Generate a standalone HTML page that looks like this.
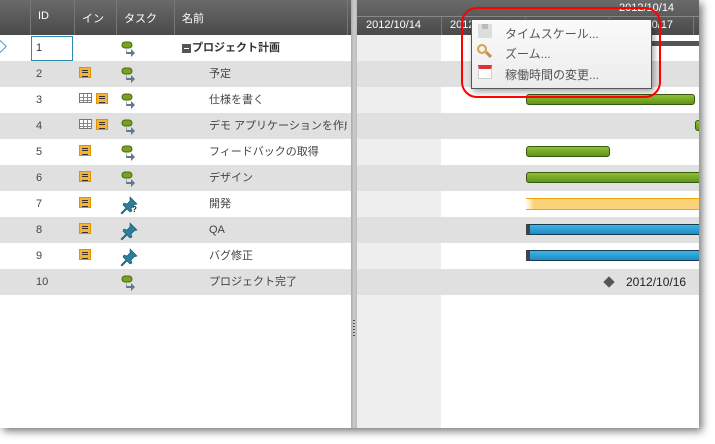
<!DOCTYPE html>
<html><head><meta charset="utf-8"><style>
*{margin:0;padding:0;box-sizing:border-box}
body{width:715px;height:444px;background:#fff;position:relative;overflow:hidden;font-family:"Liberation Sans","Noto Sans CJK JP",sans-serif;font-size:11px;color:#444}
.a{position:absolute}
#frame{left:0;top:0;width:699px;height:428px;background:#fff;box-shadow:3px 3px 8px rgba(0,0,0,.55);overflow:hidden}
.hdr{background:linear-gradient(#6a6a6a,#4a4a4a);color:#fff;font-size:11px}
.row{position:absolute;left:0;width:351px;height:26px}
.crow{position:absolute;left:357px;width:342px;height:26px}
.g{background:#e0e0e0}
.t{position:absolute;line-height:26px;white-space:nowrap}
.note{position:absolute;width:12px;height:11px;background:#f9b233;border:1px solid #e29400}
.note:after{content:"";position:absolute;left:2px;top:2px;width:6px;height:5px;border-top:1px solid #333;border-bottom:1px solid #333}
.note:before{content:"";position:absolute;left:2px;top:4px;width:6px;border-top:1px solid #333}
.cal{position:absolute;width:13px;height:10px;background:#fff;border:1px solid #777;background-image:linear-gradient(90deg,transparent 3px,#888 3px,#888 4px,transparent 4px,transparent 7px,#888 7px,#888 8px,transparent 8px),linear-gradient(transparent 3px,#888 3px,#888 4px,transparent 4px,transparent 6px,#888 6px,#888 7px,transparent 7px)}
.bar{position:absolute;height:11px;border-radius:3px}
.green{background:linear-gradient(#8fbf30,#5f9420);border:1px solid #355a10}
.blue{background:linear-gradient(#3cb4e6,#1f8cc4);border:1px solid #1a3a50;border-left:4px solid #444}
</style></head><body>
<div id="frame" class="a">
 <!-- headers -->
 <div class="a hdr" style="left:0;top:0;width:351px;height:35px"></div>
 <div class="a" style="left:30px;top:0;width:1px;height:35px;background:#777"></div>
 <div class="a" style="left:74px;top:0;width:1px;height:35px;background:#777"></div>
 <div class="a" style="left:116px;top:0;width:1px;height:35px;background:#777"></div>
 <div class="a" style="left:174px;top:0;width:1px;height:35px;background:#777"></div>
 <div class="a" style="left:347px;top:0;width:1px;height:35px;background:#777"></div>
 <div class="a" style="left:38px;top:10px;color:#fff">ID</div>
 <div class="a" style="left:82px;top:10px;color:#fff">イン</div>
 <div class="a" style="left:124px;top:10px;color:#fff">タスク</div>
 <div class="a" style="left:182px;top:10px;color:#fff">名前</div>
 <div class="a hdr" style="left:357px;top:0;width:342px;height:35px"></div>
 <div class="a" style="left:357px;top:16px;width:342px;height:1px;background:#888"></div>
 <div class="a" style="left:619px;top:2px;color:#fff">2012/10/14</div>
 <div class="a" style="left:441px;top:17px;width:1px;height:18px;background:#777"></div>
 <div class="a" style="left:525px;top:17px;width:1px;height:18px;background:#777"></div>
 <div class="a" style="left:609px;top:17px;width:1px;height:18px;background:#777"></div>
 <div class="a" style="left:693px;top:17px;width:1px;height:18px;background:#777"></div>
 <div class="a" style="left:366px;top:19px;color:#fff">2012/10/14</div>
 <div class="a" style="left:450px;top:19px;color:#fff">2012/10/15</div>
 <div class="a" style="left:618px;top:19px;color:#fff">2012/10/17</div>
 <!-- splitter -->
 <div class="a" style="left:351px;top:0;width:6px;height:428px;background:linear-gradient(90deg,#aaa,#ccc,#bbb)"></div>
 <div class="a" style="left:353px;top:320px;width:2px;height:18px;background:repeating-linear-gradient(#555 0 1px,transparent 1px 3px)"></div>
 <!-- chart background -->
 <div class="a" style="left:357px;top:35px;width:84px;height:393px;background:#eee"></div>
 <!-- rows -->
 <div class="row g" style="top:61px"></div><div class="crow g" style="top:61px"></div>
 <div class="row g" style="top:113px"></div><div class="crow g" style="top:113px"></div>
 <div class="row g" style="top:165px"></div><div class="crow g" style="top:165px"></div>
 <div class="row g" style="top:217px"></div><div class="crow g" style="top:217px"></div>
 <div class="row g" style="top:269px"></div><div class="crow g" style="top:269px"></div>
 <div class="a" style="left:31px;top:36px;width:42px;height:25px;border:1px solid #2a8ab4"></div>
 <div class="a" style="left:-4px;top:42px;width:9px;height:9px;border:1px solid #3aa0d0;transform:rotate(45deg)"></div>
 <div class="t" style="left:36px;top:35px;color:#333">1</div>
 <div class="t" style="left:36px;top:61px">2</div>
 <div class="t" style="left:36px;top:87px">3</div>
 <div class="t" style="left:36px;top:113px">4</div>
 <div class="t" style="left:36px;top:139px">5</div>
 <div class="t" style="left:36px;top:165px">6</div>
 <div class="t" style="left:36px;top:191px">7</div>
 <div class="t" style="left:36px;top:217px">8</div>
 <div class="t" style="left:36px;top:243px">9</div>
 <div class="t" style="left:36px;top:269px">10</div>
 <!-- info icons -->
 <div class="note" style="left:79px;top:67px"></div>
 <div class="cal" style="left:79px;top:93px"></div><div class="note" style="left:96px;top:93px"></div>
 <div class="cal" style="left:79px;top:119px"></div><div class="note" style="left:96px;top:119px"></div>
 <div class="note" style="left:79px;top:145px"></div>
 <div class="note" style="left:79px;top:171px"></div>
 <div class="note" style="left:79px;top:197px"></div>
 <div class="note" style="left:79px;top:223px"></div>
 <div class="note" style="left:79px;top:249px"></div>
 <!-- task icons -->
 <svg class="a" style="left:0;top:0" width="351" height="300">
  <defs>
   <g id="auto"><rect x="0" y="0" width="10" height="6" rx="3" fill="#7aa020" stroke="#4a6a10"/><path d="M5 6v5h4v-3l4 4-4 4v-3H4z" fill="#5f7a8f" transform="translate(0,-1)"/></g>
   <g id="pin"><path d="M9 1l7 7-3 1-3 3 1 3-2 1-3-3-5 5-1-1 5-5-3-3 1-2 3 1 3-3z" fill="#2a7f9a" stroke="#1a5060" stroke-width=".6"/></g>
  </defs>
  <use href="#auto" x="122" y="42"/>
  <use href="#auto" x="122" y="68"/>
  <use href="#auto" x="122" y="94"/>
  <use href="#auto" x="122" y="120"/>
  <use href="#auto" x="122" y="146"/>
  <use href="#auto" x="122" y="172"/>
  <use href="#pin" x="121" y="196"/>
  <text x="132" y="212" font-size="8" font-weight="bold" fill="#222" font-family="Liberation Sans">?</text>
  <use href="#pin" x="121" y="222"/>
  <use href="#pin" x="121" y="248"/>
  <use href="#auto" x="122" y="276"/>
 </svg>
 <div class="a" style="left:182px;top:44px;width:9px;height:9px;background:#555"></div>
 <div class="a" style="left:184px;top:48px;width:5px;height:1px;background:#fff"></div>
 <div class="t" style="left:192px;top:35px;color:#333;font-weight:bold">プロジェクト計画</div>
 <div class="t" style="left:209px;top:61px">予定</div>
 <div class="t" style="left:209px;top:87px">仕様を書く</div>
 <div class="t" style="left:209px;top:113px;width:138px;overflow:hidden">デモ アプリケーションを作成</div>
 <div class="t" style="left:209px;top:139px">フィードバックの取得</div>
 <div class="t" style="left:209px;top:165px">デザイン</div>
 <div class="t" style="left:209px;top:191px">開発</div>
 <div class="t" style="left:209px;top:217px">QA</div>
 <div class="t" style="left:209px;top:243px">バグ修正</div>
 <div class="t" style="left:209px;top:269px">プロジェクト完了</div>
 <!-- bars -->
 <div class="a" style="left:640px;top:41px;width:60px;height:5px;background:#555"></div>
 <div class="bar green" style="left:526px;top:94px;width:169px"></div>
 <div class="bar green" style="left:695px;top:120px;width:10px"></div>
 <div class="bar green" style="left:526px;top:146px;width:84px"></div>
 <div class="bar green" style="left:526px;top:172px;width:180px"></div>
 <div class="bar" style="left:526px;top:198px;width:180px;height:12px;border-radius:0;background:linear-gradient(90deg,#fff,#fbd27a 8px);border-top:1px solid #f0a800;border-bottom:1px solid #f0a800"></div>
 <div class="bar blue" style="left:526px;top:224px;width:180px;border-radius:0"></div>
 <div class="bar blue" style="left:526px;top:250px;width:180px;border-radius:0"></div>
 <div class="a" style="left:605px;top:278px;width:8px;height:8px;background:#555;transform:rotate(45deg)"></div>
 <div class="t" style="left:626px;top:269px;color:#222;font-size:12px">2012/10/16</div>
 <!-- menu -->
 <div class="a" style="left:471px;top:19px;width:181px;height:70px;background:linear-gradient(#fafafa,#ececec);border:1px solid #555;box-shadow:2px 3px 6px rgba(0,0,0,.35)"></div>
 <div class="a" style="left:478px;top:24px;width:14px;height:14px;background:#ddd"></div>
 <div class="a" style="left:482px;top:24px;width:6px;height:5px;background:#bbb"></div>
 <div class="a" style="left:477px;top:44px;width:10px;height:10px;border:2px solid #d8a050;border-radius:50%;background:#f4f0e0"></div>
 <div class="a" style="left:485px;top:53px;width:7px;height:3px;background:#c09050;transform:rotate(45deg)"></div>
 <div class="a" style="left:478px;top:65px;width:14px;height:14px;background:#fff;border:1px solid #ccc;border-top:4px solid #e03030"></div>
 <div class="a" style="left:505px;top:25px;color:#555;font-size:12px">タイムスケール...</div>
 <div class="a" style="left:505px;top:45px;color:#555;font-size:12px">ズーム...</div>
 <div class="a" style="left:505px;top:66px;color:#555;font-size:12px">稼働時間の変更...</div>
 <div class="a" style="left:461px;top:7px;width:200px;height:91px;border:2px solid #f00;border-radius:16px"></div>
</div>
</body></html>
